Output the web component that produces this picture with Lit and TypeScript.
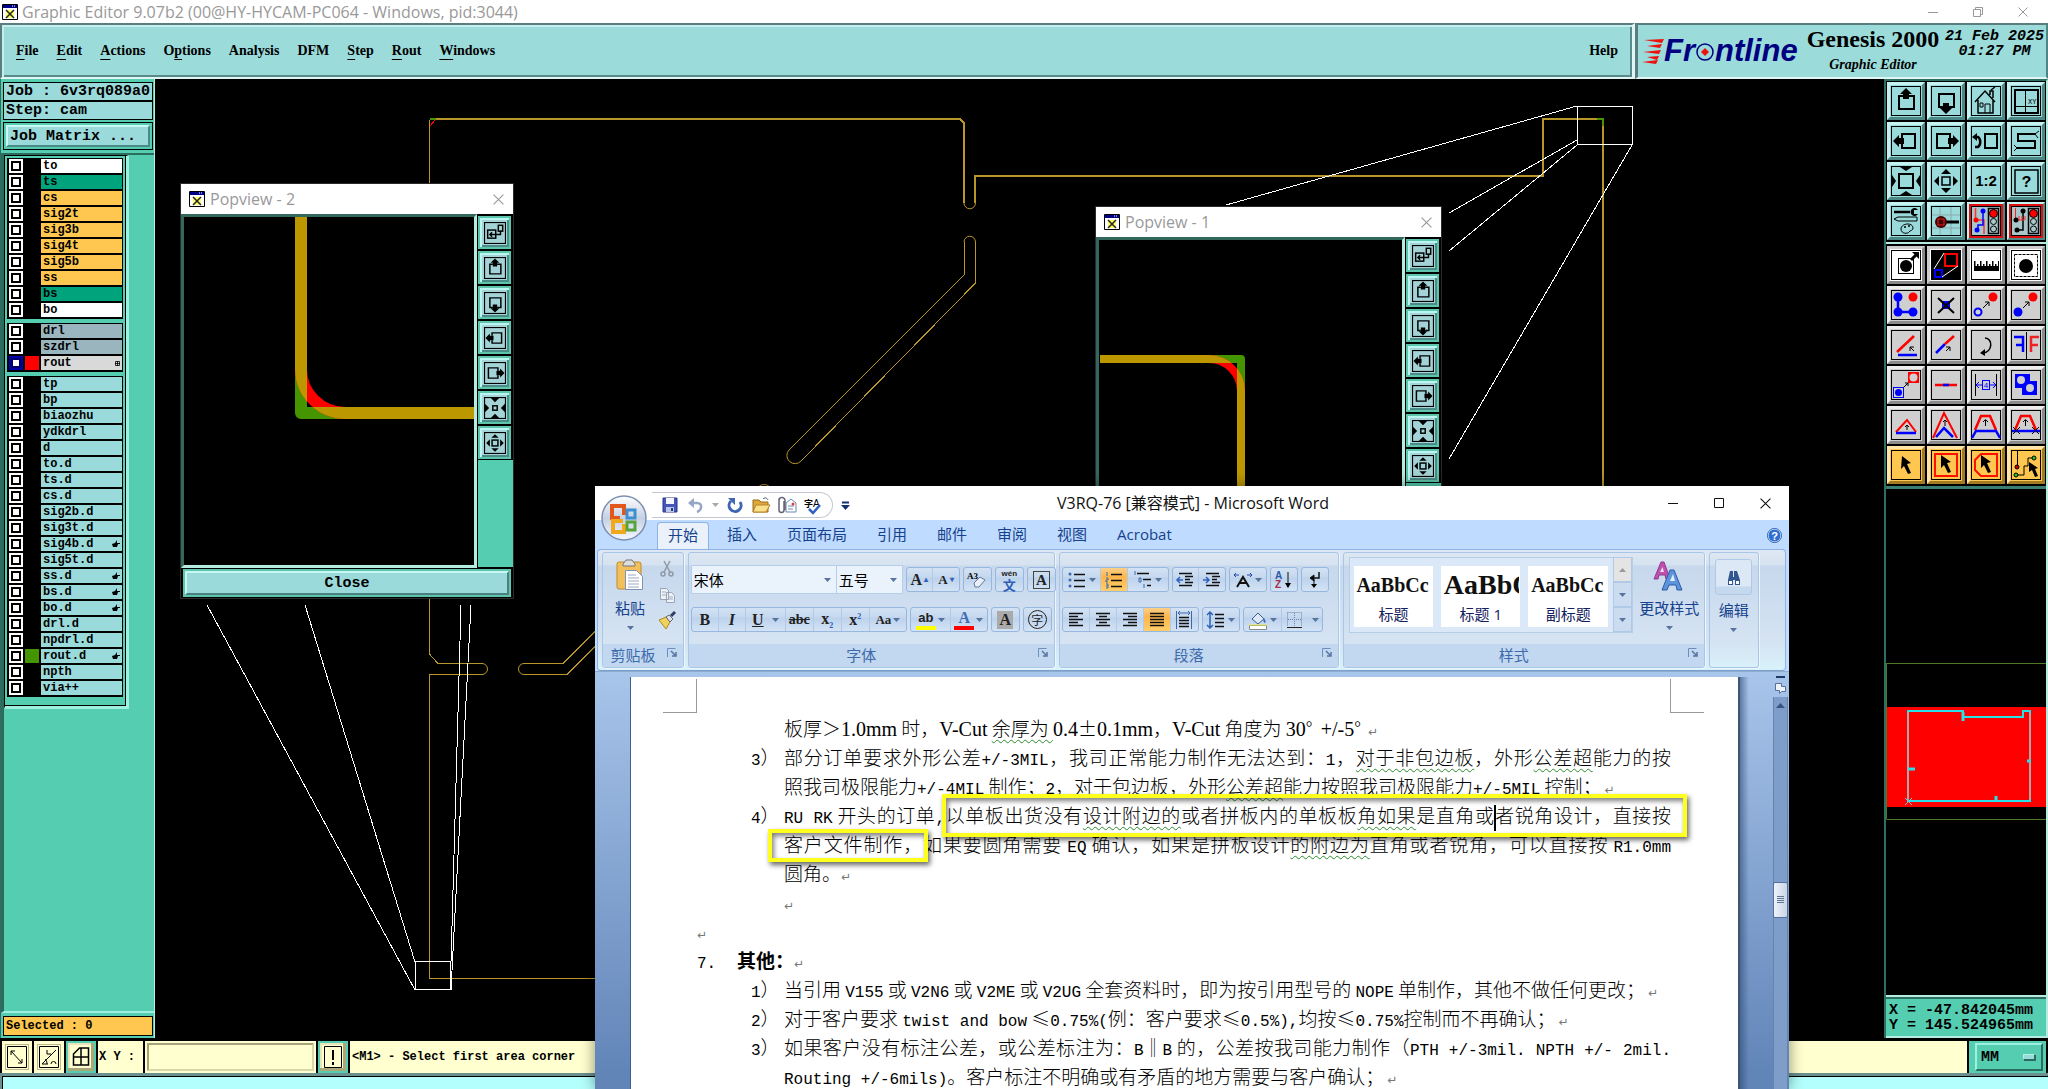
import { LitElement, html, css, svg, nothing } from "lit";
import { customElement } from "lit/decorators.js";
import { classMap } from "lit/directives/class-map.js";

type Seg = string | { w: string } | { cursor: true };

/* ---------- editor tool icons, drawn on a 30 x 30 grid ---------- */

const frame = svg`<rect x=".5" y=".5" width="29" height="29" fill="none" stroke="#000"/>`;
const cursorShape = svg`<path d="M10 5l10 7-4 1 4 9-3 1-4-8-3 3z" fill="#000"/>`;
const smallArrow = svg`<path d="M12 18l6-6M14 12h4v4" fill="none" stroke="#000"/>`;
const outward = svg`<path d="M15 3l5 5H10zM15 27l5-5H10zM3 15l5-5v10zM27 15l-5-5v10z" fill="#000"/>`;
const traffic = svg`<rect x="17.500" y="2.500" width="10" height="25" fill="none" stroke="#000" stroke-width="1.500"/>
  <circle cx="22.500" cy="7.500" r="4" fill="#f00" stroke="#000"/><circle cx="22.500" cy="15.500" r="3" fill="none" stroke="#000"/><circle cx="22.500" cy="23" r="3" fill="none" stroke="#000"/>`;

const icons: Record<string, unknown> = {
  up: svg`${frame}<path d="M12 10H8v13h15V10h-5" fill="none" stroke="#000" stroke-width="2"/><path d="M15 2l6 6h-3v5h-6V8H9z"/>`,
  down: svg`${frame}<path d="M12 21H8V8h15v13h-5" fill="none" stroke="#000" stroke-width="2"/><path d="M15 28l-6-6h3v-5h6v5h3z"/>`,
  left: svg`${frame}<path d="M11 12V8h13v14H11v-4" fill="none" stroke="#000" stroke-width="2"/><path d="M2 15l6-6v3h5v6H8v3z"/>`,
  right: svg`${frame}<path d="M19 12V8H6v14h13v-4" fill="none" stroke="#000" stroke-width="2"/><path d="M28 15l-6-6v3h-5v6h5v3z"/>`,
  home: svg`${frame}<path d="M4 16L14 5l10 11M7 14v13h15V14M19 9V5h3v7M20 4l4-3" fill="none" stroke="#000" stroke-width="1.500"/><path d="M14 27v-9h5v9M9 17h3v4H9z" fill="none" stroke="#000"/>`,
  grid: svg`${frame}<rect x="4" y="4" width="23" height="23" fill="none" stroke="#000" stroke-width="2"/><path d="M14.500 4v23M4 20.500h23" stroke="#000"/><text x="17" y="18" font-size="7" font-family="Liberation Mono">XY</text>`,
  back: svg`${frame}<rect x="14" y="8" width="12" height="14" fill="none" stroke="#000" stroke-width="2"/><path d="M4 21h3c3-2 3-8 0-10H4" fill="none" stroke="#000" stroke-width="2.500"/><path d="M1 11l5-4v8z"/>`,
  snake: svg`${frame}<path d="M25 8H7v7h17v7H6" fill="none" stroke="#000" stroke-width="2"/><path d="M24 8l4-3M24 8l3 4M6 22l-3-3M6 22l-3 3" stroke="#000"/>`,
  zin: svg`${frame}<rect x="8" y="8" width="14" height="14" fill="none" stroke="#000" stroke-width="2"/><path d="M9 1h12l-6 4zM9 29h12l-6-4zM1 9v12l4-6zM29 9v12l-4-6z"/>`,
  zsmall: svg`${frame}<rect x="12" y="12" width="6" height="6" fill="none" stroke="#000" stroke-width="2"/><path d="M9 1h12l-6 6zM9 29h12l-6-6zM1 9v12l6-6zM29 9v12l-6-6z"/>`,
  zout: svg`${frame}<rect x="11" y="11" width="8" height="8" fill="none" stroke="#000" stroke-width="1.500"/>${outward}`,
  ratio: svg`${frame}<text x="15" y="20" text-anchor="middle" font-size="15" font-weight="700" font-family="Liberation Sans">1:2</text>`,
  help: svg`${frame}<rect x="4" y="4" width="23" height="23" fill="none" stroke="#000" stroke-width="1.500"/><text x="15.500" y="21" text-anchor="middle" font-size="16" font-weight="700" font-family="Liberation Mono">?</text>`,
  tools: svg`${frame}<path d="M3 6h16" stroke="#000" stroke-width="2.500"/><path d="M27 4a4 4 0 1 0 0 4h-4V4z"/><path d="M3 13l4-2h19v4H7z" fill="none" stroke="#000"/><path d="M10 23c0-6 12-7 12-1 0 3-3 2-4 4s-8 2-8-3z" fill="none" stroke="#000"/><circle cx="14" cy="21" r="1"/><circle cx="18" cy="20" r="1"/>`,
  probe: svg`<path d="M9 1v28M20 1v28M1 9h28M1 22h28" stroke="#8aa9a9"/>${frame}<path d="M12 16h16" stroke="#000" stroke-width="3"/><circle cx="10" cy="16" r="6" fill="#400"/><rect x="7" y="13" width="6" height="6" fill="none" stroke="#d22"/>`,
  netred: svg`${frame}<path d="M4.500 2v12M4 14h9v14" fill="none" stroke="#f33" stroke-width="1.500"/><path d="M12 5v14H7v5" fill="none" stroke="#00f" stroke-width="1.500"/><circle cx="5" cy="14" r="2.500" fill="#f00"/><circle cx="12" cy="5" r="2.500" fill="#00f"/><circle cx="6" cy="24" r="2.500" fill="#00f"/>${traffic}`,
  netblk: svg`${frame}<path d="M12 5v19H7" fill="none" stroke="#000" stroke-width="1.500"/><path d="M4.500 2v12h9M8 14v-4M11 14v-4M14 14v-4" fill="none" stroke="#f22"/><circle cx="5" cy="14" r="2.500"/><circle cx="12" cy="5" r="2.500"/><circle cx="6" cy="24" r="2.500"/>${traffic}`,
  popout: svg`${frame}<rect x="5" y="11" width="11" height="11" fill="none" stroke="#000" stroke-width="2"/><rect x="19.500" y="4.500" width="6" height="8" fill="none" stroke="#000"/><path d="M22.500 12v5H8M11 14l-3 3 3 3" fill="none" stroke="#000"/>`,
  pick: svg`${frame}<rect x="7.500" y="8.500" width="15" height="15" fill="none" stroke="#000"/><circle cx="15" cy="16" r="6"/><path d="M20 10l5-5" stroke="#000" stroke-width="3"/><path d="M28 2v7l-7-7z"/>`,
  morph: svg`<rect width="30" height="30" fill="#000"/><rect x="14" y="4" width="12" height="12" fill="none" stroke="#f00" stroke-width="2"/><rect x="4" y="20" width="7" height="7" fill="none" stroke="#00f" stroke-width="2"/><path d="M13 3L3 19M27 16l-16 11" stroke="#fff"/>`,
  ruler: svg`${frame}<path d="M3 11h1.500v5H6v-2h1.500v2H9v-5h1.500v5H12v-2h1.500v2H15v-5h1.500v5H18v-2h1.500v2H21v-5h1.500v5H24v-2h1.500v2H27v-5h1v10H3z"/>`,
  marquee: svg`${frame}<rect x="3.500" y="4.500" width="23" height="22" fill="none" stroke="#000" stroke-dasharray="3 1"/><circle cx="15" cy="16" r="7"/>`,
  nodes: svg`${frame}<path d="M7 7v15h15" fill="none" stroke="#00f" stroke-width="2.500"/><circle cx="7" cy="7" r="4.500" fill="#00f"/><circle cx="7" cy="22" r="4.500" fill="#00f"/><circle cx="22" cy="22" r="4.500" fill="#00f"/><circle cx="22" cy="7" r="4.500" fill="#f00"/>`,
  remove: svg`${frame}<rect x="11" y="11" width="8" height="8" fill="#00f"/><path d="M7 8l16 15M23 8L7 23" stroke="#000" stroke-width="2"/>`,
  copyto: svg`${frame}<circle cx="22" cy="7" r="4.500" fill="#f00"/><circle cx="7" cy="22" r="3.500" fill="none" stroke="#00f" stroke-width="2"/>${smallArrow}`,
  moveto: svg`${frame}<circle cx="22" cy="7" r="4.500" fill="#f00"/><circle cx="7" cy="22" r="4.500" fill="#00f"/>${smallArrow}`,
  angle: svg`${frame}<path d="M6 22L23 6" stroke="#f00" stroke-width="2.500"/><path d="M7 25h19" stroke="#00f" stroke-width="2.500"/><path d="M23 21l-4-4M19 21v-4h4" fill="none" stroke="#000"/>`,
  extend: svg`${frame}<path d="M5 23l9-9" stroke="#00f" stroke-width="2.500"/><path d="M14 14l9-8" stroke="#f00" stroke-width="2.500"/><path d="M15 21l4-4M15 17h4v4" fill="none" stroke="#000"/>`,
  rotate: svg`${frame}<path d="M14 8c8 0 8 14-2 15" fill="none" stroke="#000" stroke-width="1.500"/><path d="M9 23l5-4v7z"/>`,
  mirror: svg`${frame}<path d="M15.500 2v27" stroke="#000"/><path d="M3 7h9v15M5 15h7" fill="none" stroke="#00f" stroke-width="2.500"/><path d="M28 7h-8v15M20 15h7" fill="none" stroke="#e22" stroke-width="2.500"/>`,
  swap: svg`${frame}<path d="M17 2h11v11H17z" fill="#f00"/><circle cx="22.500" cy="7.500" r="4" fill="#cfcfcf"/><rect x="2.500" y="17.500" width="10" height="10" fill="none" stroke="#00f"/><circle cx="7.500" cy="22.500" r="3.500" fill="#00f"/><path d="M13 17l4-4M14 13h3v3" fill="none" stroke="#000"/>`,
  seg: svg`${frame}<path d="M4 15h22" stroke="#f00" stroke-width="2.500"/><path d="M12 15h6" stroke="#00f" stroke-width="2.500"/>`,
  space: svg`${frame}<path d="M4.500 4v22M25.500 4v22" stroke="#000"/><path d="M6 15h5M19 15h5M8 12l-3 3 3 3M22 12l3 3-3 3" fill="none" stroke="#00f"/><rect x="11.500" y="10.500" width="7" height="9" fill="none" stroke="#00f"/><text x="15" y="18" text-anchor="middle" font-size="8" fill="#00f" font-family="Liberation Sans">4</text>`,
  merge: svg`${frame}<path d="M4 4h15v7h7v14H11v-7H4z" fill="#00f"/><circle cx="10" cy="10" r="4" fill="#cfcfcf"/><circle cx="19" cy="18" r="4" fill="#cfcfcf"/>`,
  tri: svg`${frame}<path d="M5 22L16 10l9 12" fill="none" stroke="#f00" stroke-width="2"/><path d="M5 23h20" stroke="#00f" stroke-width="2.500"/><path d="M16 20v-5M14 17l2-2 2 2" fill="none" stroke="#000"/>`,
  peak: svg`${frame}<path d="M2 28L13 3l13 25" fill="none" stroke="#f00" stroke-width="2"/><path d="M5 27l8-9 9 9" fill="none" stroke="#00f" stroke-width="2.500"/><path d="M14 16v-6M12 12l2-2 2 2" fill="none" stroke="#000"/>`,
  trap: svg`${frame}<path d="M4 20l6-14h9l6 14" fill="none" stroke="#f00" stroke-width="2.500"/><path d="M1 28l4-7h20l4 7" fill="none" stroke="#00f" stroke-width="2.500"/><path d="M14.500 16v-6M12 12l2.500-2.500L17 12" fill="none" stroke="#000"/>`,
  trapx: svg`${frame}<path d="M4 20l6-14h9l6 14" fill="none" stroke="#f00" stroke-width="2.500"/><path d="M1 21h28" fill="none" stroke="#00f" stroke-width="2.500"/><path d="M14.500 16v-6M12 12l2.500-2.500L17 12M2 17l7 7M9 17l-7 7M21 17l7 7M28 17l-7 7" fill="none" stroke="#000"/>`,
  sel: svg`${frame}<path d="M11 6l9 7-4 1 4 9-3 1-4-8-3 3z"/>`,
  selbox: svg`${frame}<rect x="4" y="4" width="22" height="22" fill="none" stroke="#f10" stroke-width="2"/>${cursorShape}`,
  selpoly: svg`${frame}<path d="M10 4h16v22H10l-6-6V10z" fill="none" stroke="#f10" stroke-width="2"/>${cursorShape}`,
  selnet: svg`${frame}<path d="M6.500 1v15M5 25h8v-9h4V8h6" fill="none" stroke="#000"/><circle cx="6" cy="17" r="2" fill="#c00" stroke="#000"/><circle cx="23" cy="8" r="2" fill="#2c2" stroke="#000"/><circle cx="5" cy="25" r="2" fill="#2c2" stroke="#000"/><path d="M18 12l9 6-3 1 3 7-3 1-3-7-3 2z"/>`,
  diag: svg`<path d="M.5.500h19v21H.5z" fill="none" stroke="#000"/><path d="M4 5l11 12M4 9V5h4M15 13v4h-4" fill="none" stroke="#000"/>`,
  polar: svg`<path d="M.5.500h19v21H.5z" fill="none" stroke="#000"/><path d="M17 4L3 18h6M8 18c0-3-1-4-2-5M8 4v4h4M12 18a2 2 0 1 1 5 0" fill="none" stroke="#000"/>`,
  snap: svg`<path d="M2.500 8l6-6h9v17h-15zM2 11h16M10 2v17" fill="none" stroke="#000" stroke-width="1.500"/>`,
  bang: svg`<path d="M.5.500h17v21H.5z" fill="none" stroke="#000"/><path d="M9 4v10M9 16v3" stroke="#000" stroke-width="2"/>`,
};

const topTools = ["up", "down", "home", "grid", "left", "right", "back", "snake", "zin", "zout", "ratio", "help", "tools", "probe", "netred", "netblk"];
const editTools: [string, string][] = [
  ["pick", "w"], ["morph", "w"], ["ruler", "w"], ["marquee", "w"],
  ["nodes", "g"], ["remove", "g"], ["copyto", "g"], ["moveto", "g"],
  ["angle", "g"], ["extend", "g"], ["rotate", "g"], ["mirror", "g"],
  ["swap", "g"], ["seg", "g"], ["space", "g"], ["merge", "g"],
  ["tri", "g"], ["peak", "g"], ["trap", "g"], ["trapx", "g"],
  ["sel", "o"], ["selbox", "o"], ["selpoly", "o"], ["selnet", "o"],
];
const popTools = ["popout", "up", "down", "left", "right", "zsmall", "zout"];

const layers: [string, string, string?][][] = [
  [["to", "white"], ["ts", "green"], ["cs", "amber"], ["sig2t", "amber"], ["sig3b", "amber"], ["sig4t", "amber"], ["sig5b", "amber"], ["ss", "amber"], ["bs", "green"], ["bo", "white"]],
  [["drl", "slate"], ["szdrl", "slate"], ["rout", "grey", "work"]],
  [["tp", ""], ["bp", ""], ["biaozhu", ""], ["ydkdrl", ""], ["d", ""], ["to.d", ""], ["ts.d", ""], ["cs.d", ""], ["sig2b.d", ""], ["sig3t.d", ""], ["sig4b.d", "", "hand"], ["sig5t.d", ""], ["ss.d", "", "hand"], ["bs.d", "", "hand"], ["bo.d", "", "hand"], ["drl.d", ""], ["npdrl.d", ""], ["rout.d", "", "hand ref"], ["npth", ""], ["via++", ""]],
];

const menus: [string, number][] = [["File", 0], ["Edit", 0], ["Actions", 0], ["Options", 1], ["Analysis", -1], ["DFM", -1], ["Step", 0], ["Rout", 0], ["Windows", 0]];

const appIcon = html`<svg class="appicon" width="16" height="16" viewBox="0 0 16 16"><path d="M.5.500h15v15H.5z" fill="#fff" stroke="#000"/><path d="M1 1h14v3H1z" fill="#008"/><path d="M10 2h1M12 2h1" stroke="#fff"/><path d="M4 6h8v8H4z" fill="#ff6"/><path d="M4 6l8 8M12 6l-8 8" stroke="#222" stroke-width="1.500"/></svg>`;
const closeX = (s: number) => html`<svg width=${s} height=${s} viewBox="0 0 10 10"><path d="M.5.500l9 9M9.500.500l-9 9" stroke="currentColor"/></svg>`;

/* ---------- document text ---------- */

const latinRun = /[!-~]+(?: +[!-~]+)*/g;
const mixed = (t: string) => {
  const out: unknown[] = [];
  let last = 0;
  for (const m of t.matchAll(latinRun)) {
    out.push(t.slice(last, m.index), html`<span class="lat">${m[0]}</span>`);
    last = (m.index ?? 0) + m[0].length;
  }
  out.push(t.slice(last));
  return out;
};
const segs = (list: Seg[]) =>
  list.map((s) => (typeof s === "string" ? mixed(s) : "w" in s ? html`<span class="wavy">${mixed(s.w)}</span>` : html`<span class="cursor"></span>`));

const doc: { n?: string; t: Seg[]; kind?: string; mark?: boolean }[] = [
  { t: ["板厚＞1.0mm 时，V-Cut ", { w: "余厚为 " }, "0.4±0.1mm，V-Cut 角度为 30°  +/-5° "], kind: "roman", mark: true },
  { n: "3）", t: ["部分订单要求外形公差+/-3MIL，我司正常能力制作无法达到：1，", { w: "对于非包边板" }, "，外形", { w: "公差超" }, "能力的按"], kind: "full" },
  { t: ["照我司极限能力+/-4MIL 制作；2，对于包边板，外形", { w: "公差超" }, "能力按照我司极限能力+/-5MIL 控制；"], mark: true },
  { n: "4）", t: ["RU RK 开头的订单,以单板出货没有", { w: "设计附边的" }, "或者拼板内的单板板", { w: "角如果" }, "是直角或", { cursor: true }, "者锐角设计，直接按"], kind: "full" },
  { t: ["客户文件制作，如果要圆角需要 EQ 确认，如果是拼板设计", { w: "的附边为" }, "直角或者锐角，可以直接按 R1.0mm"], kind: "full" },
  { t: ["圆角。"], mark: true },
  { t: [], mark: true },
  { t: [], kind: "outer", mark: true },
  { n: "7.", t: ["其他："], kind: "head", mark: true },
  { n: "1）", t: ["当引用 V155 或 V2N6 或 V2ME 或 V2UG 全套资料时，即为按引用型号的 NOPE 单制作，其他不做任何更改；"], mark: true },
  { n: "2）", t: ["对于客户要求 twist and bow ≤0.75%(例：客户要求≤0.5%),均按≤0.75%控制而不再确认；"], mark: true },
  { n: "3）", t: ["如果客户没有标注公差，或公差标注为：B‖B 的，公差按我司能力制作（PTH +/-3mil. NPTH +/- 2mil."], kind: "full" },
  { t: ["Routing +/-6mils)。客户标注不明确或有矛盾的地方需要与客户确认；"], mark: true },
];

/* ---------- ribbon icons on a 20 x 20 grid ---------- */

const ic = (body: unknown, w = 20, h = 20) => html`<svg width=${w} height=${h} viewBox="0 0 ${w} ${h}">${body}</svg>`;
const caret = html`<svg class="caret" width="7" height="4" viewBox="0 0 7 4"><path d="M0 0h7L3.500 4z" fill="#56749f"/></svg>`;
const lines = (a: number[][]) => svg`<path d=${a.map(([x, y, w]) => `M${x} ${y}.5h${w}`).join("")} stroke="#111" stroke-width="1.500"/>`;
const para = {
  bullets: ic(svg`<circle cx="3" cy="4" r="1.500" fill="#3d68b0"/><circle cx="3" cy="10" r="1.500" fill="#3d68b0"/><circle cx="3" cy="16" r="1.500" fill="#3d68b0"/>${lines([[7, 4, 11], [7, 10, 11], [7, 16, 11]])}`),
  numbers: ic(svg`<path d="M3 2v4M2 8h2v2H2v2h2M2 14h2v4H2M2 16h2" fill="none" stroke="#3d68b0"/>${lines([[7, 4, 11], [7, 10, 11], [7, 16, 11]])}`),
  multi: ic(svg`<path d="M2 1v4M6 8h2v4H6zM11 14v4" fill="none" stroke="#3d68b0"/>${lines([[4, 3, 12], [10, 9, 8], [14, 15, 4]])}`),
  outdent: ic(svg`<path d="M8 10H2M5 7l-3 3 3 3" fill="none" stroke="#2e62b8" stroke-width="1.500"/>${lines([[4, 3, 13], [10, 6, 8], [10, 9, 5], [10, 12, 8], [4, 15, 13]])}`),
  indent: ic(svg`<path d="M1 10h6M4 7l3 3-3 3" fill="none" stroke="#2e62b8" stroke-width="1.500"/>${lines([[4, 3, 13], [10, 6, 8], [10, 9, 5], [10, 12, 8], [4, 15, 13]])}`),
  asian: ic(svg`<path d="M4 17l6-10 6 10M7 13h6" fill="none" stroke="#111" stroke-width="2"/><path d="M1 5h5M3 3L1 5l2 2M19 5h-5M17 3l2 2-2 2" fill="none" stroke="#2547a8"/>`),
  sort: ic(svg`<text x="1" y="9" font-size="10" font-weight="700" fill="#2d57a8" font-family="Liberation Sans">A</text><text x="1" y="18" font-size="10" font-weight="700" fill="#a23048" font-family="Liberation Sans">Z</text><path d="M14 2v15" stroke="#111"/><path d="M11 13h6l-3 5z"/>`),
  mark: ic(svg`<path d="M14 2v6H8" fill="none" stroke="#111" stroke-width="1.500"/><path d="M9 5v6L5 8zM9 10v5" stroke="#111"/><path d="M6 14h6l-3 4z"/>`),
  al: ic(lines([[3, 3, 14], [3, 6, 9], [3, 9, 14], [3, 12, 9], [3, 15, 14]])),
  ac: ic(lines([[3, 3, 14], [6, 6, 8], [3, 9, 14], [6, 12, 8], [3, 15, 14]])),
  ar: ic(lines([[3, 3, 14], [8, 6, 9], [3, 9, 14], [8, 12, 9], [3, 15, 14]])),
  aj: ic(lines([[3, 3, 14], [3, 6, 14], [3, 9, 14], [3, 12, 14], [3, 15, 14]])),
  ad: ic(svg`<path d="M2.500 1v18M17.500 1v18M4 3h12M6 1L4 3l2 2M14 1l2 2-2 2" fill="none" stroke="#3f67ad"/>${lines([[5, 7, 10], [5, 10, 10], [5, 13, 10], [5, 16, 10]])}`),
  spacing: ic(svg`<path d="M4 2v16M1 5l3-3 3 3M1 15l3 3 3-3" fill="none" stroke="#2e62b8" stroke-width="1.500"/>${lines([[9, 4, 9], [9, 8, 9], [9, 12, 9], [9, 16, 9]])}`),
  fill: ic(svg`<path d="M4 9l6-6 6 6-6 5z" fill="#dfe8f5" stroke="#3a5d96"/><path d="M16 8c2 3 2 4 1 5-2-1-2-3-1-5z" fill="#3a6ac0"/><path d="M1.500 15.500h17v4h-17z" fill="#fff" stroke="#888"/><path d="M1 15h18" stroke="#ee4"/>`),
  border: ic(svg`<path d="M3.500 2.500h14v14M3.500 2.500v14M10.500 3v13M4 9.500h13" fill="none" stroke="#6d85ad" stroke-dasharray="1 1"/><path d="M3 17.500h15" stroke="#222"/>`),
};
const launcher = html`<button class="launch" aria-label="More options"><svg width="11" height="10" viewBox="0 0 11 10"><path d="M.5 9V.500h8" fill="none" stroke="#6c8fc0"/><path d="M4 3l4 4M9 4v4H5" fill="none" stroke="#56749f" stroke-width="1.500"/></svg></button>`;
const seg = (...b: unknown[]) => html`<div class="seg">${b}</div>`;
const rb = (label: string, w: string, body: unknown, on = false) => html`<button class="rb ${w} ${on ? "on" : ""}" aria-label=${label}>${body}</button>`;

@customElement("app-root")
export class AppRoot extends LitElement {
  static styles = css`
    :host { display: block; }
    * { box-sizing: border-box; }
    button, select, input { font: inherit; color: inherit; margin: 0; padding: 0; border: 0; background: none; border-radius: 0; }
    svg { display: block; flex: none; }
    .app { position: relative; display: flex; flex-direction: column; height: 100vh; min-height: 700px; overflow: hidden; background: #000; color: #000; font-family: "Liberation Mono", monospace; }
    .mono15 { font-size: 15px; font-weight: 700; line-height: 15px; white-space: pre; }

    .titlebar { display: flex; align-items: center; height: 23px; flex: none; background: #fff; color: #999; padding: 0 20px 0 2px; gap: 4px; font: 16px/22px "Open Sans", sans-serif; }
    .titlebar .name { flex: 1; }
    .wctl { display: flex; align-items: center; gap: 35px; }
    .wctl button { display: flex; }

    .header { display: flex; height: 56px; flex: none; }
    .bar { border: 2px solid; border-color: #5a7d7d #4f8583 #dff6f4 #5a7d7d; background: #9bdcdb; box-shadow: inset 2px 2px #c4efee, inset -2px -2px #5b8a8a; display: flex; align-items: center; }
    .menubar { flex: 1; padding: 0 14px; gap: 18px; font: 700 14px/20px "Liberation Serif", serif; border-right: 3px solid #dff6f4; }
    .menubar u { text-underline-offset: 4px; text-decoration-thickness: 1px; }
    .menubar .grow { flex: 1; }
    .brand { width: 413px; padding: 0 2px 0 4px; box-shadow: none; border-left: 3px solid #5a7d7d; gap: 4px; }
    .logo { display: flex; align-items: center; font: italic 700 31px/40px "Liberation Sans", sans-serif; color: #000080; width: 159px; }
    .product { font: 700 24px/24px "Liberation Serif", serif; text-align: center; width: 136px; white-space: nowrap; }
    .product em { display: block; font-size: 14px; line-height: 22px; margin-top: 3px; }
    .clock { font-style: italic; font-size: 15px; font-weight: 700; line-height: 15px; text-align: center; height: 44px; white-space: nowrap; }

    .main { display: flex; flex: 1; min-height: 0; padding-bottom: 3px; }
    .left { width: 155px; background: #55cdb0; border-left: 1px solid #2e6d62; border-right: 1px solid #b5f0df; display: flex; flex-direction: column; padding: 3px 1px 2px 2px; }
    .info { border: 1px solid #000; background: #9bdada; height: 19px; line-height: 17px; padding: 0 2px; }
    .matrix { border: 1px solid #000; margin-top: 2px; padding: 2px; }
    .matrix button { display: block; width: 100%; height: 22px; text-align: left; padding: 0 2px; background: #9bdada; border: 2px solid; border-color: #c9f7f3 #4a8a88 #4a8a88 #c9f7f3; }
    .layerwrap { flex: 1; min-height: 0; margin: 3px -1px 3px -2px; border-left: 3px solid #2c6c5e; border-top: 2px solid #2c6c5e; border-bottom: 2px solid #9ff0e0; }
    .layerbox { width: 125px; padding: 2px 3px 9px 2px; border: 1px solid #000; border-right: 3px solid #9ff0e0; border-bottom: 3px solid #9ff0e0; display: flex; flex-direction: column; gap: 4px; box-shadow: inset -1px -1px #000; }
    .layers { background: #000; padding: 1px 1px 2px 2px; display: flex; flex-direction: column; gap: 2px; }
    .layer { display: grid; grid-template-columns: 14px 14px 1fr; gap: 2px; height: 14px; }
    .layer input { appearance: none; width: 14px; height: 14px; background: #fff; box-shadow: inset 0 0 0 2px #fff, inset 0 0 0 4px #000; }
    .layer.work input { box-shadow: inset 0 0 0 2px #00a, inset 0 0 0 4px #00006a; }
    .swatch { background: #000; }
    .work .swatch { background: #f00; }
    .ref .swatch { background: #459500; }
    .layer label { display: flex; justify-content: space-between; align-items: center; background: #9bdada; font-size: 12px; font-weight: 700; line-height: 14px; padding: 0 2px; }
    .white label { background: #fff; } .green label { background: #00a37c; } .amber label { background: #ffc74f; } .slate label { background: #9bb5bf; } .grey label { background: #d9d9d9; }
    .selected { border: 1px solid #000; background: #ffc74f; height: 20px; font-size: 12px; line-height: 18px; font-weight: 700; padding: 0 2px; }
    .board { flex: 1; min-width: 0; position: relative; }
    .board svg { width: 100%; height: 100%; }

    .right { width: 164px; border-left: 2px solid #2f6f62; border-right: 2px solid #b5ecdf; display: flex; flex-direction: column; border-top: 2px solid #2f6f62; }
    .tools { display: grid; grid-template-columns: repeat(4, 38px); gap: 2px; padding: 1px 1px 2px; border-bottom: 2px solid #b5ecdf; }
    .tools + .tools { padding-top: 2px; border-bottom: 3px solid #3b7d70; }
    .tool { width: 38px; height: 38px; background: #9bdada; border: 3px solid; border-color: #c5f3f1 #4c8886 #4c8886 #c5f3f1; display: grid; place-items: center; }
    .tool.g { background: #cfcfcf; border-color: #eee #8c8c8c #8c8c8c #eee; }
    .tool.w { background: #fff; border-color: #ccc #888 #888 #ccc; }
    .tool.o { background: #ffc74f; border-color: #ffe6a8 #a27c22 #a27c22 #ffe6a8; }
    .tool.r { outline: 2px solid #e01010; outline-offset: -4px; background: #a9c6c8; }
    .overview { flex: 1; min-height: 0; }
    .coords { height: 43px; background: #55cdb0; border-top: 2px solid #b5ecdf; border-bottom: 2px solid #b5ecdf; padding: 6px 3px 0; box-shadow: inset 0 2px #2f6f62; }

    .status { display: flex; height: 32px; flex: none; gap: 2px; padding: 0 2px; background: #000; font-size: 12px; font-weight: 700; }
    .status > * { background: #ffffcf; }
    .sbtn { width: 30px; display: grid; place-items: center; border: 3px solid #ffffcf; box-shadow: inset 0 0 0 1px #bbb98a; }
    .sbtn.t { border: 2px solid #55cdb0; box-shadow: inset -3px -3px #aaa878, inset 2px 2px #e8e6b8; }
    .xy { width: 45px; line-height: 32px; padding-left: 1px; white-space: pre; }
    .status .entry { width: 171px; padding: 2px; }
    .entry input { width: 100%; height: 28px; border: 2px solid; border-color: #a5a37a #d9d7ac #d9d7ac #a5a37a; padding: 0 4px; background: #ffffcf; }
    .msg { flex: 1; line-height: 32px; padding-left: 2px; white-space: pre; }
    .units { width: 77px; background: #55cdb0; padding: 2px 3px 2px 6px; display: flex; }
    .unitbox { flex: 1; display: flex; align-items: center; border: 2px solid; border-color: #9ff0e0 #2c6c5e #2c6c5e #9ff0e0; padding: 0 6px 0 4px; }
    .unitbox select { appearance: none; flex: 1; width: 30px; font-size: 15px; font-weight: 700; }
    .knob { width: 12px; height: 6px; background: #9bdada; border: 1px solid; border-color: #b5f0df #2c6c5e #2c6c5e #b5f0df; box-shadow: 1px 1px #2c6c5e; }
    .strip { height: 16px; flex: none; background: #b3fffd; border-top: 3px solid #6a9090; border-left: 2px solid #6a9090; box-shadow: inset 1px 1px #000; }

    /* popview windows */
    .pop { position: absolute; display: flex; flex-direction: column; height: 416px; background: #000; border: 1px solid #2a2a2a; }
    .pop.two { left: 180px; top: 183px; width: 334px; }
    .pop.one { left: 1095px; top: 206px; width: 347px; }
    .poptitle { display: flex; align-items: center; height: 30px; background: #fff; color: #999; padding: 0 9px 0 8px; gap: 5px; font: 16px/28px "Open Sans", sans-serif; }
    .poptitle span { flex: 1; }
    .poptitle button { display: flex; }
    .popbody { display: flex; flex: 1; min-height: 0; }
    .view { flex: 1; border: 3px solid; border-color: #33695d #b5ecdf #b5ecdf #33695d; overflow: hidden; }
    .view svg { width: 100%; height: 100%; }
    .popbar { width: 36px; display: flex; flex-direction: column; gap: 2px; padding: 2px 1px 1px; background: #000; }
    .popbar::after { content: ""; flex: 1; background: #55cdb0; margin: -1px -1px 0 0; }
    .popbar button { width: 33px; height: 33px; flex: none; background: #a3d3d6; border: 2px solid #5cc5ab; box-shadow: inset 2px 2px #b9f5f1, inset -2px -2px #4c8c88; display: grid; place-items: center; }
    .popbar path, .popbar rect { stroke-width: 2px; }
    .closebar { margin: 1px 2px; height: 28px; border: 2px solid #5cc5ab; display: flex; }
    .closebar button { flex: 1; background: #9bdada; border: 2px solid; border-color: #c9f7f3 #4a8080 #4a8080 #c9f7f3; font-size: 15px; font-weight: 700; }

    /* word processor window */
    .word { position: absolute; left: 595px; top: 486px; bottom: 0; width: 1194px; display: flex; flex-direction: column; background: #fff; box-shadow: 0 0 14px rgba(0, 0, 0, .45); color: #15428b; font: 15px/20px "Open Sans", "Noto Sans CJK SC", sans-serif; }
    .wtitle { display: flex; align-items: center; height: 34px; flex: none; padding: 0 18px 0 57px; }
    .qat { display: flex; align-items: center; height: 26px; width: 181px; gap: 6px; padding: 1px 4px 1px 8px; border: 1px solid #c3c8d0; border-left: 0; border-radius: 0 13px 13px 0; margin-top: 4px; }
    .qat button, .more { display: flex; }
    .more { margin: 4px 0 0 8px; }
    .wname { flex: 1; text-align: center; color: #111; font-size: 16px; padding-right: 132px; }
    .wtitle .wctl { color: #111; gap: 36px; }
    .orb { position: absolute; left: 6px; top: 9px; z-index: 2; }
    .tabs { display: flex; align-items: flex-end; height: 29px; flex: none; background: #bfdbff; padding: 0 7px 0 62px; gap: 6px; }
    .tabs button { height: 27px; padding: 0 12px 3px; line-height: 22px; }
    .tabs .on { background: #eaf1fa; border: 1px solid #8db2e3; border-bottom: 0; border-radius: 4px 4px 0 0; padding: 0 10px 2px; }
    .tabs .grow { flex: 1; }
    .tabs .helpb { padding: 0 0 6px; height: auto; }
    .ribbon { flex: none; display: flex; gap: 4px; height: 122px; margin: 0 3px 0 2px; padding: 2px 26px 2px 4px; border: 1px solid #8db2e3; border-bottom-color: #7ba0cf; border-radius: 4px; background: linear-gradient(#dfe8f3, #d6e2f0 15px, #c7d8ed 16px, #d5e3f2 92px, #d8f2fb); }
    .ribwrap { background: #bfdbff; }
    .grp { display: flex; flex-direction: column; border: 1px solid #a9c6e6; border-radius: 3px; box-shadow: 1px 1px #eef6fd; }
    .grpbody { flex: 1; display: flex; }
    .grpname { position: relative; height: 23px; background: #c1d8f0; color: #3e6aaa; text-align: center; line-height: 22px; padding-right: 20px; white-space: nowrap; }
    .launch { position: absolute; right: 5px; top: 4px; }
    .g1 { width: 83px; } .g2 { width: 367px; } .g3 { width: 284px; } .g4 { width: 362px; } .g5 { width: 51px; }
    .paste { width: 54px; display: flex; flex-direction: column; align-items: center; padding-top: 6px; }
    .paste span { margin: 7px 0 8px; }
    .clip { display: flex; flex-direction: column; gap: 6px; padding-top: 5px; }
    .rows { display: flex; flex-direction: column; padding: 14px 3px 0 2px; gap: 15px; }
    .row { display: flex; gap: 3px; height: 25px; align-items: center; }
    .combo { display: flex; align-items: center; height: 29px; background: #eaf2fb; border: 1px solid #b5cfe9; padding-right: 5px; }
    .combo + .combo { margin-left: -4px; }
    .combo select { appearance: none; flex: 1; width: 20px; padding-left: 2px; color: #000; }
    .c1 { width: 146px; } .c2 { width: 67px; }
    .seg { display: flex; border: 1px solid #98b7de; border-radius: 3px; height: 25px; background: linear-gradient(#d3e2f4, #c5d8ee 9px, #bcd2ec 10px, #d3e3f5); }
    .rb { display: flex; align-items: center; justify-content: center; gap: 2px; border-right: 1px solid #b3cae6; color: #222; font: 700 16px/20px "Liberation Serif", serif; }
    .rb:last-child { border-right: 0; }
    .rb.on { background: linear-gradient(#fbd08a, #ffb54a 9px, #ffcf6b); }
    .a26 { width: 26px; } .a27 { width: 27px; } .a28 { width: 28px; } .a36 { width: 36px; } .a37 { width: 38px; } .a40 { width: 40px; }
    .bi { font-style: italic; } .bu { text-decoration: underline; } .bs { text-decoration: line-through; font-size: 14px; }
    .rb sub, .rb sup { font-size: 8px; color: #2e62b8; line-height: 8px; }
    .sm { font-size: 13px; }
    .hl { border-bottom: 4px solid #ff0; font: 700 13px/16px "Liberation Sans", sans-serif; width: 20px; }
    .fc { border-bottom: 4px solid #f00; color: #3f6cb5; width: 20px; line-height: 16px; font-size: 16px; }
    .boxed { border: 1px solid #444; width: 17px; line-height: 16px; font-size: 15px; }
    .shaded { background: #aaa; width: 16px; line-height: 18px; }
    .ring { border: 1px solid #222; border-radius: 50%; width: 19px; height: 19px; font: 12px/17px "Noto Sans CJK SC", sans-serif; }
    .wen { font: 700 8px/9px "Liberation Sans", sans-serif; }
    .wen b { display: block; font: 700 13px/13px "Noto Sans CJK SC", sans-serif; color: #2f5fb5; }
    .gallery { display: flex; gap: 8px; margin: 4px 0 0 5px; height: 76px; border: 1px solid #b5cfe9; background: #dbe8f7; padding: 8px 0 0 4px; width: 284px; }
    .card { width: 80px; height: 61px; background: #fff; display: flex; flex-direction: column; align-items: center; color: #14215c; }
    .card b { width: 76px; overflow: hidden; white-space: nowrap; color: #111; font: 700 20px/38px "Liberation Serif", serif; text-align: left; height: 38px; padding-left: 1px; }
    .card b.big { font-size: 28px; }
    .gscroll { display: flex; flex-direction: column; margin-top: -9px; margin-left: -3px; width: 19px; }
    .gscroll button { flex: 1; border: 1px solid #b0c9e6; background: #cbdcf0; display: grid; place-items: center; }
    .gscroll button:first-child { background: #e4e4e4; }
    .change, .editb { display: flex; flex-direction: column; align-items: center; white-space: nowrap; }
    .change { width: 70px; margin-left: 2px; padding-top: 8px; }
    .change span { margin: 6px 0 8px; }
    .editb { width: 100%; padding-top: 6px; }
    .editb i { width: 37px; height: 36px; border: 1px solid #b0c9e6; border-radius: 3px; display: grid; place-items: center; background: linear-gradient(#dce8f5 26px, #c4d8ee 27px); }
    .editb span { margin: 5px 0 8px; }

    .docarea { flex: 1; min-height: 0; display: flex; padding: 5px 1px 0 35px; background: linear-gradient(#a8c5ea, #9dbbe3 60px, #6285b8 400px); overflow: hidden; border-top: 1px solid #8fabce; }
    .page { position: relative; flex: 1; background: #fff; border-left: 1px solid #3d5f93; border-right: 2px solid #3d5575; padding: 36px 0 0 66px; color: #000; font: 19px/29px "Noto Sans CJK SC", sans-serif; font-weight: 300; overflow: hidden; }
    .crop { position: absolute; top: 2px; width: 34px; height: 34px; border: 0 solid #999; border-bottom-width: 1px; }
    .crop.l { left: 32px; border-right-width: 1px; } .crop.r { right: 34px; border-left-width: 1px; }
    .ln { display: grid; grid-template-columns: 54px 33px 887px; height: 29px; white-space: nowrap; }
    .ln .no { grid-column: 2; } .ln .tx { grid-column: 3; }
    .ln.full .tx { text-align-last: justify; white-space: normal; }
    .lat { font-family: "Liberation Mono", monospace; font-size: 16px; font-weight: 400; }
    .roman .tx { white-space: pre; }
    .roman .lat { font-family: "Liberation Serif", serif; font-size: 20px; }
    .ln.outer .tx { grid-column: 1; }
    .ln.head { grid-template-columns: 40px 1fr; font-weight: 700; }
    .ln.head .no { grid-column: 1; } .ln.head .tx { grid-column: 2; }
    .wavy { text-decoration: underline wavy #2c8a2c 1px; text-underline-offset: 3px; text-decoration-skip-ink: none; }
    .cursor { display: inline-block; width: 2px; height: 26px; margin: 0 -1px; background: #000; vertical-align: middle; }
    .pm { color: #777; font: 12px/20px "DejaVu Sans", sans-serif; padding-left: 3px; }
    .ln .pm:first-child { padding-left: 0; }
    .callout { position: absolute; border: 4px solid #ffff1e; box-shadow: 2px 3px 5px rgba(0, 0, 0, .6), inset 2px 3px 5px rgba(0, 0, 0, .5); }
    .callout.wide { left: 311px; top: 117px; width: 745px; height: 43px; }
    .callout.small { left: 137px; top: 152px; width: 160px; height: 33px; }
    .gutter { width: 32px; background: linear-gradient(90deg, rgba(50, 75, 115, .6), transparent 9px); }
    .scroll { width: 16px; margin-top: -5px; display: flex; flex-direction: column; align-items: center; color: #2d4a7a; padding-top: 4px; }
    .trough { width: 15px; flex: 1; margin-top: 3px; background: #7f9dc9; border: 1px solid #6583b0; border-width: 0 1px; display: flex; flex-direction: column; align-items: center; padding-top: 6px; }
    .thumb { width: 15px; height: 36px; margin-top: 174px; border: 1px solid #54719f; border-radius: 2px; background: linear-gradient(90deg, #eef3f9, #c9d5e6); display: grid; place-items: center; }
  `;

  private tool(name: string, tone = "") {
    return html`<button class="tool ${tone}" aria-label=${name}><svg width="30" height="30" viewBox="0 0 30 30">${icons[name]}</svg></button>`;
  }

  private layerRow([name, tone, flags]: [string, string, string?]) {
    const f = flags ?? "";
    const id = "layer-" + name;
    return html`<div class=${classMap({ layer: true, [tone || "plain"]: true, work: f.includes("work"), ref: f.includes("ref") })}>
      <input type="checkbox" id=${id} /><span class="swatch"></span>
      <label for=${id}>${name}${f.includes("hand")
        ? html`<svg width="8" height="8" viewBox="0 0 8 8"><path d="M0 4l3-1 2-3v3h3v1H6L5 7H1z"/></svg>`
        : f.includes("work") ? html`<svg width="5" height="5" viewBox="0 0 5 5"><path d="M.5.500h4v4h-4zM2.500 0v5M0 2.500h5" fill="none" stroke="#000" stroke-width=".8"/></svg>` : nothing}</label>
    </div>`;
  }

  private board() {
    return html`<div class="board"><svg aria-label="Board outline"><g transform="translate(-155 -79)" fill="none" shape-rendering="crispEdges">
      <g stroke="#b8962a">
        <path d="M429.500 598V119.500M429.500 598v56l8 9h45M429.500 674.500h53M429.500 674V978.500H600"/>
        <path d="M436 119H960l4 4V203M975 203V176H1543" stroke-width="2"/>
        <path d="M1543 177V119H1603V500" stroke-width="2"/>
        <path d="M964.500 275V242M975.500 283V242M964 275L789 450M975.500 283L801 461"/>
        <path d="M524 663.500h39l34-34M524 674.500h43l30-30"/>
      </g>
      <g stroke="#b8962a" shape-rendering="auto">
        <path d="M482 663.500a5.500 5.500 0 0 1 0 11M524 674.500a5.500 5.500 0 0 1 0-11M964 203a5.500 5.500 0 0 0 11.500 0M964 242a5.500 5.500 0 0 1 11.500 0M789 450a7 7 0 0 0 12 11M757 489a8 8 0 0 1 13-2"/>
      </g>
      <path d="M430 119h6" stroke="#459500" stroke-width="2"/><path d="M430 126l5-6" stroke="#f00"/>
      <path d="M1597 119h6v7" stroke="#459500" stroke-width="2"/>
      <path d="M1577.500 106.500h55v38h-55zM415.500 961.500h35v28h-35z" stroke="#fff"/>
      <path d="M1577 106L1226 205M1577 140L1449 213M1577 145L1449 251M1632 145L1449 459M207 605l208 385M305 605l110 357M461 605l-10 357M471 605l-20 385" stroke="#fff"/>
    </g></svg></div>`;
  }

  private popview(cls: string, title: string, art: unknown) {
    return html`<section class="pop ${cls}">
      <div class="poptitle">${appIcon}<span>${title}</span><button aria-label="Close window">${closeX(11)}</button></div>
      <div class="popbody"><div class="view"><svg>${art}</svg></div>
        <div class="popbar">${popTools.map((t) => html`<button aria-label=${t}><svg width="22" height="22" viewBox="0 0 30 30">${icons[t]}</svg></button>`)}</div></div>
      <div class="closebar"><button>Close</button></div>
    </section>`;
  }

  private group(cls: string, name: string, body: unknown, launch = true) {
    return html`<div class="grp ${cls}"><div class="grpbody">${body}</div>${name ? html`<div class="grpname">${name}${launch ? launcher : nothing}</div>` : nothing}</div>`;
  }

  private ribbon() {
    return html`<div class="ribwrap"><div class="ribbon">
      ${this.group("g1", "剪贴板", html`
        <button class="paste">${ic(svg`<rect x="1" y="3" width="24" height="27" rx="2" fill="#f3bf5b" stroke="#c08a2c"/><path d="M7 5l3-4h6l3 4v2H7z" fill="#ddd" stroke="#777"/><path d="M9.500 11.500h11l6 6v13h-17z" fill="#fff" stroke="#7d94b8"/><path d="M12 16h8M12 19h11M12 22h11M12 25h11M12 28h11" stroke="#9aa9c4"/>`, 28, 32)}<span>粘贴</span>${caret}</button>
        <div class="clip">
          <button aria-label="剪切">${ic(svg`<path d="M7 3l6 11M13 3L7 14" stroke="#8f99a8" stroke-width="1.500"/><circle cx="6" cy="16" r="2" fill="none" stroke="#8f99a8" stroke-width="1.500"/><circle cx="14" cy="16" r="2" fill="none" stroke="#8f99a8" stroke-width="1.500"/>`)}</button>
          <button aria-label="复制">${ic(svg`<path d="M3.500 4.500h6l2 2v9h-8zM9.500 8.500h5l3 3v7h-8z" fill="#eef1f6" stroke="#98a5b9"/><path d="M5 8h4M5 11h4M11 13h5M11 15h5" stroke="#a5afc0"/>`)}</button>
          <button aria-label="格式刷">${ic(svg`<path d="M2 10l7-3 4 5-4 7z" fill="#f0d35c" stroke="#b08a20"/><path d="M9 7l3-2 4 4-3 3z" fill="#dfe4ec" stroke="#667"/><path d="M14 6l4-4" stroke="#333c66" stroke-width="3"/>`)}</button>
        </div>`)}
      ${this.group("g2", "字体", html`<div class="rows">
        <div class="row">
          <div class="combo c1"><select aria-label="字体"><option>宋体</option></select>${caret}</div>
          <div class="combo c2"><select aria-label="字号"><option>五号</option></select>${caret}</div>
          ${seg(rb("增大字体", "a26", html`A<sup>▴</sup>`), rb("缩小字体", "a26", html`<span class="sm">A</span><sup>▾</sup>`))}
          ${seg(rb("清除格式", "a27", ic(svg`<text x="0" y="9" font-size="9" font-weight="700" font-family="Liberation Serif">A3</text><path d="M7 13l6-6 5 3-6 7H8z" fill="#e9eef6" stroke="#667a9c"/>`)))}
          ${seg(rb("拼音指南", "a27", html`<span class="wen">wén<b>文</b></span>`))}
          ${seg(rb("字符边框", "a27", html`<span class="boxed">A</span>`))}
        </div>
        <div class="row">
          ${seg(rb("加粗", "a27", "B"), rb("倾斜", "a27", html`<span class="bi">I</span>`), rb("下划线", "a40", html`<span class="bu">U</span>&nbsp;${caret}`), rb("删除线", "a28", html`<span class="bs">abc</span>`), rb("下标", "a28", html`<span>x<sub>2</sub></span>`), rb("上标", "a28", html`<span>x<sup>2</sup></span>`), rb("更改大小写", "a36", html`<span class="sm">Aa</span>${caret}`))}
          ${seg(rb("突出显示", "a40", html`<span class="hl">ab</span>${caret}`), rb("字体颜色", "a36", html`<span class="fc">A</span>${caret}`))}
          ${seg(rb("字符底纹", "a27", html`<span class="shaded">A</span>`))}
          ${seg(rb("带圈字符", "a27", html`<span class="ring">字</span>`))}
        </div></div>`)}
      ${this.group("g3", "段落", html`<div class="rows">
        <div class="row">
          ${seg(rb("项目符号", "a37", html`${para.bullets}${caret}`), rb("编号", "a27", para.numbers, true), rb("多级列表", "a40", html`${para.multi}${caret}`))}
          ${seg(rb("减少缩进", "a26", para.outdent), rb("增加缩进", "a26", para.indent))}
          ${seg(rb("中文版式", "a36", html`${para.asian}${caret}`))}
          ${seg(rb("排序", "a26", para.sort))}
          ${seg(rb("显示标记", "a26", para.mark))}
        </div>
        <div class="row">
          ${seg(rb("左对齐", "a27", para.al), rb("居中", "a27", para.ac), rb("右对齐", "a27", para.ar), rb("两端对齐", "a27", para.aj, true), rb("分散对齐", "a27", para.ad))}
          ${seg(rb("行距", "a36", html`${para.spacing}${caret}`))}
          ${seg(rb("底纹", "a37", html`${para.fill}${caret}`), rb("边框", "a40", html`${para.border}&nbsp;${caret}`))}
        </div></div>`)}
      ${this.group("g4", "样式", html`
        <div class="gallery">
          <button class="card"><b>AaBbCc</b>标题</button><button class="card"><b class="big">AaBbC</b>标题 1</button><button class="card"><b>AaBbCc</b>副标题</button>
          <div class="gscroll"><button aria-label="上"><svg width="7" height="4" viewBox="0 0 7 4"><path d="M0 4h7L3.500 0z" fill="#999"/></svg></button><button aria-label="下">${caret}</button><button aria-label="更多">${caret}</button></div>
        </div>
        <button class="change">${ic(svg`<path d="M1 18L8 1h3l6 17h-4l-1-4H6l-1 4z" fill="#c24fae" stroke="#8c3a90"/><path d="M7 11h4L9.500 6z" fill="#e6e0f2"/><path d="M9 29l8-20h4l8 20h-5l-1-5h-7l-2 5z" fill="#5c94dc" stroke="#2d5ca8"/><path d="M17 20h5l-2-7z" fill="#e2edf9"/>`, 32, 31)}<span>更改样式</span>${caret}</button>`)}
      ${this.group("g5", "", html`<button class="editb"><i>${ic(svg`<path d="M3 12l2-9h3v6h1V3h3l3 9v5h-5v-5H8v5H3z" fill="#34568f"/><path d="M4 13h3v3H4zM11 13h3v3h-3z" fill="#fff"/>`, 18, 18)}</i><span>编辑</span>${caret}</button>`)}
    </div></div>`;
  }

  private word() {
    const blue = "#3e66b4";
    return html`<section class="word">
      <svg class="orb" width="46" height="46" viewBox="0 0 46 46"><defs><linearGradient id="o" x2="0" y2="1"><stop stop-color="#fff"/><stop offset=".5" stop-color="#c4d0e2"/><stop offset="1" stop-color="#f4f8ff"/></linearGradient></defs>
        <circle cx="23" cy="23" r="22" fill="url(#o)" stroke="#7d90b0" stroke-width="1.500"/>
        <g fill="none" stroke-width="4"><path d="M23 20v-9H11v12h8" stroke="#e2571c"/><path d="M26 15h8v8h-8z" stroke="#3c8fd0" stroke-width="3"/><path d="M22 26H12v11h11v-8" stroke="#f0a81c"/><path d="M26 27h8v8h-8z" stroke="#5aa33c" stroke-width="3"/></g></svg>
      <div class="wtitle">
        <div class="qat">
          <button aria-label="保存">${ic(svg`<path d="M3 3h14v14H3z" fill="#4656b8" stroke="#27348c"/><path d="M6 3h8v6H6z" fill="#f4f6fb"/><path d="M6 12h8v5H6z" fill="#bcc6e6"/><path d="M11 13h2v3h-2z" fill="#27348c"/>`)}</button>
          <button aria-label="撤消">${ic(svg`<path d="M5 8h6c6 0 5 7 0 9" fill="none" stroke="#97a6c6" stroke-width="2.500"/><path d="M8 3v10L2 8z" fill="#97a6c6"/>`)}</button>
          <button aria-label="撤消列表"><svg width="7" height="4" viewBox="0 0 7 4"><path d="M0 0h7L3.500 4z" fill="#a8a8a8"/></svg></button>
          <button aria-label="重复">${ic(svg`<path d="M6 6a6 6 0 1 0 9 1" fill="none" stroke="${blue}" stroke-width="3"/><path d="M3 3h7v7z" fill="${blue}"/>`)}</button>
          <button aria-label="打开">${ic(svg`<path d="M2 5h6l2 2h7v10H2z" fill="#e0a63a" stroke="#9a6b16"/><path d="M5 10h14l-4 7H2z" fill="#fbe08c" stroke="#b5852a"/><path d="M12 4c2-2 4-1 5 1" fill="none" stroke="#456"/>`)}</button>
          <button aria-label="邮件">${ic(svg`<path d="M9 8l5-4 5 4v9H9z" fill="#fff" stroke="#6c86b4"/><path d="M11 11h6M11 14h5" stroke="#6c86b4"/><path d="M7 6v9a2 2 0 0 1-5 0V6a3 3 0 0 1 6-1v10" fill="none" stroke="#667" stroke-width="1.500"/><circle cx="16" cy="9" r="1.500" fill="#e03c30"/>`)}</button>
          <button aria-label="拼写">${ic(svg`<text x="1" y="12" font-size="9" font-weight="700" font-family="Noto Sans CJK SC">字</text><text x="10" y="12" font-size="10" font-family="Liberation Sans">A</text><path d="M6 14l4 4 7-8" fill="none" stroke="#3060c0" stroke-width="2.500"/>`)}</button>
        </div>
        <button class="more" aria-label="自定义"><svg width="9" height="9" viewBox="0 0 9 9"><path d="M1 1.500h7" stroke="#15306e" stroke-width="2"/><path d="M0 4h9L4.500 9z" fill="#15306e"/></svg></button>
        <div class="wname">V3RQ-76 [兼容模式] - Microsoft Word</div>
        <div class="wctl"><button aria-label="最小化"><svg width="10" height="10" viewBox="0 0 10 10"><path d="M0 5.500h10" stroke="#111"/></svg></button><button aria-label="最大化"><svg width="10" height="10" viewBox="0 0 10 10"><path d="M.5.500h9v9h-9z" fill="none" stroke="#111"/></svg></button><button aria-label="关闭">${closeX(11)}</button></div>
      </div>
      <div class="tabs">${["开始", "插入", "页面布局", "引用", "邮件", "审阅", "视图", "Acrobat"].map((t, i) => html`<button class=${i ? "" : "on"}>${t}</button>`)}<span class="grow"></span>
        <button class="helpb" aria-label="帮助"><svg width="15" height="15" viewBox="0 0 15 15"><circle cx="7.500" cy="7.500" r="6.500" fill="#2f6fd0" stroke="#fff"/><circle cx="7.500" cy="7.500" r="7" fill="none" stroke="#2a5ba8"/><text x="7.500" y="11.500" text-anchor="middle" font-size="11" font-weight="700" fill="#fff" font-family="Liberation Sans">?</text></svg></button></div>
      ${this.ribbon()}
      <div class="docarea">
        <article class="page">
          <span class="crop l"></span><span class="crop r"></span>
          ${doc.map((l) => html`<div class="ln ${l.kind ?? ""}">${l.n ? html`<span class="no">${mixed(l.n)}</span>` : nothing}<span class="tx">${segs(l.t)}${l.mark ? html`<span class="pm">↵</span>` : nothing}</span></div>`)}
          <span class="callout wide"></span><span class="callout small"></span>
        </article>
        <div class="gutter"></div>
        <div class="scroll"><svg width="15" height="18" viewBox="0 0 15 18"><path d="M3 1h9" stroke="#1f3a6a" stroke-width="2"/><path d="M2.500 7.500h6v3h4v5h-4l-2 2v-3h-4z" fill="#eef3fa" stroke="#56719e"/></svg>
          <div class="trough"><svg width="9" height="5" viewBox="0 0 9 5"><path d="M0 5h9L4.500 0z" fill="#38557f"/></svg><div class="thumb"><svg width="7" height="8" viewBox="0 0 7 8"><path d="M0 .5h7M0 2.500h7M0 4.500h7M0 6.500h7" stroke="#5e7595"/></svg></div></div>
        </div>
      </div>
    </section>`;
  }

  render() {
    return html`<div class="app">
      <div class="titlebar">${appIcon}<span class="name">Graphic Editor 9.07b2 (00@HY-HYCAM-PC064 - Windows, pid:3044)</span>
        <div class="wctl"><button aria-label="Minimize"><svg width="10" height="10" viewBox="0 0 10 10"><path d="M0 5.500h10" stroke="#999"/></svg></button><button aria-label="Restore"><svg width="10" height="10" viewBox="0 0 10 10"><path d="M.5 2.500h7v7h-7zM2.500 2V.500h7v7H8" fill="none" stroke="#999"/></svg></button><button aria-label="Close">${closeX(10)}</button></div></div>
      <div class="header">
        <nav class="bar menubar">${menus.map(([m, u]) => html`<button>${u < 0 ? m : html`${m.slice(0, u)}<u>${m[u]}</u>${m.slice(u + 1)}`}</button>`)}<span class="grow"></span><button>Help</button></nav>
        <div class="bar brand">
          <div class="logo"><svg width="22" height="26" viewBox="0 0 22 26"><path d="M2 2l20-1-2 4zM5 8l15-2-2 4zM1 14l18-2-2 4zM5 19l12-1-2 4zM0 24l16-2-2 4z" fill="#e11"/></svg><span>Fr</span><svg width="20" height="20" viewBox="0 0 20 20"><circle cx="10" cy="11" r="8" fill="none" stroke="#000080" stroke-width="1.500"/><path d="M10 7l4 4-4 4-4-4z" fill="#e11"/></svg><span>ntline</span></div>
          <div class="product">Genesis 2000<em>Graphic Editor</em></div>
          <div class="clock">21 Feb 2025<br />01:27 PM</div>
        </div>
      </div>
      <div class="main">
        <aside class="left">
          <div class="info mono15">Job : 6v3rq089a0</div><div class="info mono15">Step: cam</div>
          <div class="matrix"><button class="mono15">Job Matrix ...</button></div>
          <div class="layerwrap"><div class="layerbox">${layers.map((g) => html`<div class="layers">${g.map((l) => this.layerRow(l))}</div>`)}</div></div>
          <div class="selected">Selected : 0</div>
        </aside>
        ${this.board()}
        <aside class="right">
          <div class="tools">${topTools.map((t) => this.tool(t, t.startsWith("net") ? "r" : ""))}</div>
          <div class="tools">${editTools.map(([t, c]) => this.tool(t, c))}</div>
          <svg class="overview" width="160" height="100%"><g transform="translate(0 1)"><path d="M0 217h160v100H0z" fill="#f00"/><path d="M.5 173.500H160M.5 329.500H160M.5 173v156" fill="none" stroke="#4c7a2a"/>
            <path d="M22 221h55v6h60v-6h7v90H22z" fill="none" stroke="#29e0e8" stroke-width="2"/><path d="M22 223v86M144 224v85" stroke="#b3a5a8" stroke-width="2"/><path d="M77 222v9M22 279h7M141 271h4M110 306v5" stroke="#29e0e8" stroke-width="3"/><path d="M19 308l7 7M26 308l-7 7" stroke="#9bd"/></g></svg>
          <div class="coords mono15">X = -47.842045mm
Y = 145.524965mm</div>
        </aside>
      </div>
      <div class="status">
        ${["diag", "polar", "snap"].map((n) => html`<button class="sbtn ${n === "snap" ? "t" : ""}" aria-label=${n}><svg width="20" height="22" viewBox="0 0 20 22">${icons[n]}</svg></button>`)}
        <label class="xy" for="xy">X Y :</label><div class="entry"><input id="xy" /></div>
        <button class="sbtn t" aria-label="Alerts"><svg width="18" height="22" viewBox="0 0 18 22">${icons.bang}</svg></button>
        <div class="msg">&lt;M1&gt; - Select first area corner</div>
        <div class="units"><div class="unitbox"><select aria-label="Units"><option>MM</option></select><span class="knob"></span></div></div>
      </div>
      <div class="strip"></div>
      ${this.popview("two", "Popview - 2", svg`<g transform="translate(-184 -217)"><clipPath id="c2"><path d="M295 217h12v190h190v12H295z"/></clipPath><path d="M301 217v196h190" fill="none" stroke="#459500" stroke-width="12" stroke-linejoin="round"/><path d="M301 217V369A44 44 0 0 0 345 413H490" fill="none" stroke="#f00" stroke-width="12"/><path clip-path="url(#c2)" d="M301 217V369A44 44 0 0 0 345 413H490" fill="none" stroke="#bc9700" stroke-width="12"/></g>`)}
      ${this.popview("one", "Popview - 1", svg`<g transform="translate(-1099 -240)"><clipPath id="c1"><path d="M1099 355h146v150h-8V363h-138z"/></clipPath><path d="M1100 359h141v150" fill="none" stroke="#459500" stroke-width="8" stroke-linejoin="round"/><path d="M1100 359h109a32 32 0 0 1 32 32v120" fill="none" stroke="#f00" stroke-width="8"/><path clip-path="url(#c1)" d="M1100 359h109a32 32 0 0 1 32 32v120" fill="none" stroke="#bc9700" stroke-width="8"/></g>`)}
      ${this.word()}
    </div>`;
  }
}
